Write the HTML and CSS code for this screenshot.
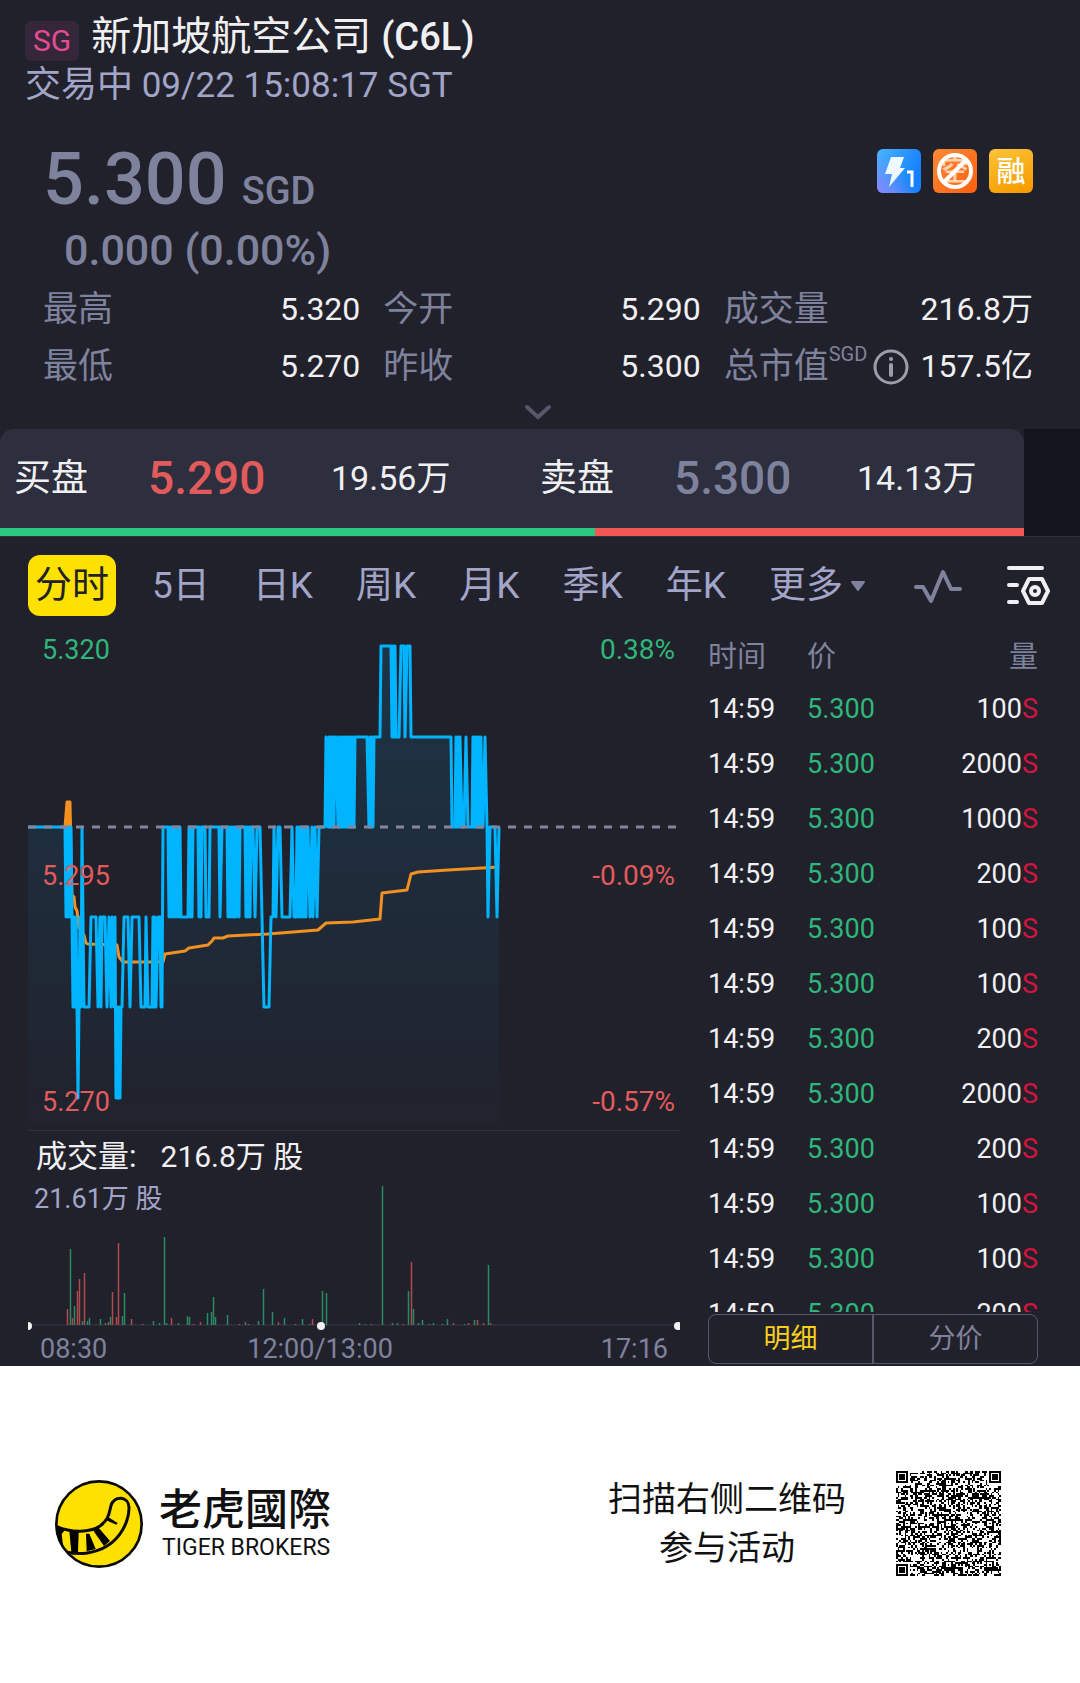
FILE: index.html
```html
<!DOCTYPE html>
<html lang="zh-CN">
<head>
  <meta charset="UTF-8" />
  <meta name="viewport" content="width=device-width, initial-scale=1" />
  <title>新加坡航空公司 (C6L)</title>
  <link rel="stylesheet" href="styles.css">
</head>
<body>
  <main class="app">
    <header class="header">
      <div class="title-row">
        <span class="market">SG</span>
        <h1>新加坡航空公司 <span class="code">(C6L)</span></h1>
      </div>
      <p class="status"><span class="cn">交易中</span> 09/22 15:08:17 SGT</p>
    </header>

    <section class="quote">
      <div class="quote-top">
        <div class="price-row"><strong class="price">5.300</strong><span class="currency">SGD</span></div>
        <div class="badges">
          <svg class="badge" viewBox="0 0 44 44">
            <defs>
              <linearGradient id="blue" x1="0" y1="0" x2="1" y2="0.4">
                <stop offset="0" stop-color="#4ab4ff" />
                <stop offset="1" stop-color="#1580fd" />
              </linearGradient>
              <linearGradient id="violet" x1="0" y1="1" x2="0.5" y2="0.5">
                <stop offset="0" stop-color="#8a86ff" />
                <stop offset="1" stop-color="#8a86ff" stop-opacity="0" />
              </linearGradient>
            </defs>
            <rect width="44" height="44" rx="6" fill="url(#blue)" />
            <rect width="44" height="44" rx="6" fill="url(#violet)" />
            <path d="M14 8h13l-4 11h5L12 38l3-13H8z" fill="#eef8ff" />
            <path d="M30 23h5v15" fill="none" stroke="#fff" stroke-width="3" />
          </svg>
          <svg class="badge" viewBox="0 0 44 44">
            <defs>
              <linearGradient id="orange" x1="0" y1="0" x2="1" y2="1">
                <stop offset="0" stop-color="#ff8a35" />
                <stop offset="1" stop-color="#ff5f10" />
              </linearGradient>
            </defs>
            <rect width="44" height="44" rx="6" fill="url(#orange)" />
            <text class="badge-text faded" x="22" y="32">空</text>
            <circle cx="22" cy="22" r="16" fill="none" stroke="#fff" stroke-width="4" />
            <path d="M11 33 33 11" stroke="#fff" stroke-width="4" />
          </svg>
          <svg class="badge" viewBox="0 0 44 44">
            <defs>
              <linearGradient id="gold" x1="0.3" y1="0" x2="0.7" y2="1">
                <stop offset="0" stop-color="#fbc034" />
                <stop offset="1" stop-color="#f79c00" />
              </linearGradient>
            </defs>
            <rect width="44" height="44" rx="6" fill="url(#gold)" />
            <text class="badge-text" x="22" y="33">融</text>
          </svg>
        </div>
      </div>
      <p class="change">0.000 (0.00%)</p>

      <dl class="stats">
        <div><dt>最高</dt><dd>5.320</dd></div>
        <div><dt>今开</dt><dd>5.290</dd></div>
        <div><dt>成交量</dt><dd>216.8万</dd></div>
        <div><dt>最低</dt><dd>5.270</dd></div>
        <div><dt>昨收</dt><dd>5.300</dd></div>
        <div>
          <dt>总市值<span class="unit">SGD</span></dt>
          <dd>
            <button class="info" aria-label="说明">
              <svg viewBox="0 0 36 36" width="36" height="36">
                <circle cx="18" cy="18" r="16" fill="none" stroke="currentColor" stroke-width="3" />
                <circle cx="18" cy="10" r="2" fill="currentColor" />
                <path d="M18 16v10" stroke="currentColor" stroke-width="4" stroke-linecap="round" />
              </svg>
            </button>157.5亿
          </dd>
        </div>
      </dl>
      <button class="expand" aria-label="展开">
        <svg viewBox="0 0 28 16" width="28" height="16">
          <path d="M3 3l11 10L25 3" fill="none" stroke="currentColor" stroke-width="4" stroke-linecap="round" />
        </svg>
      </button>
    </section>

    <section class="depth">
      <div class="depth-card">
        <div class="depth-row">
          <div class="side"><span class="side-name">买盘</span><span class="side-price down">5.290</span><span class="side-qty">19.56万</span></div>
          <div class="side"><span class="side-name">卖盘</span><span class="side-price">5.300</span><span class="side-qty">14.13万</span></div>
        </div>
        <div class="ratio"><div class="ratio-buy" style="width: 58.1%"></div></div>
      </div>
    </section>

    <nav class="toolbar">
      <button class="tab active">分时</button>
      <button class="tab">5日</button>
      <button class="tab">日K</button>
      <button class="tab">周K</button>
      <button class="tab">月K</button>
      <button class="tab">季K</button>
      <button class="tab">年K</button>
      <button class="tab more">更多<svg viewBox="0 0 14 10" width="14" height="10"><path d="M1 1h12L7 9z" fill="#7f829d" stroke="#7f829d" stroke-width="2" stroke-linejoin="round" /></svg></button>
      <div class="tools">
        <button class="tool" aria-label="指标">
          <svg viewBox="0 0 48 42" width="48" height="42">
            <path d="M2 22h7l8 14L29 7l8 17h9" fill="none" stroke="#7f829d" stroke-width="4" stroke-linecap="round" stroke-linejoin="round" />
          </svg>
        </button>
        <button class="tool" aria-label="设置">
          <svg viewBox="0 0 44 42" width="44" height="42" fill="none" stroke="#f0f0f2" stroke-width="4" stroke-linecap="round" stroke-linejoin="round">
            <path d="M3 3h33M3 20h8M3 37h8" />
            <path d="M23 14h13l6 12-6 12H23l-6-12z" />
            <circle cx="29" cy="26" r="4" />
          </svg>
        </button>
      </div>
    </nav>

    <section class="panel">
      <div class="charts">
        <div class="chart">
          <svg class="plot" viewBox="0 0 652 500">
            <defs>
              <linearGradient id="area" x1="0" y1="0" x2="0" y2="1">
                <stop offset="0" stop-color="#00b4ff" stop-opacity="0.13" />
                <stop offset="1" stop-color="#00b4ff" stop-opacity="0.01" />
              </linearGradient>
            </defs>
            <path id="priceArea" fill="url(#area)" />
            <path d="M37 198L39 172H42L44 198z" fill="#ff8c0a" />
            <polyline class="avg-line" points="37,197 39,172 42,172 43,230 44,265 46,267 47,277 49,281 51,298 56,305 58,313 60,314 89,315 91,327 95,332 135,332 137,324 157,321 161,318 180,315 184,311 186,308 195,308 200,306 240,304 265,302 290,300 298,293 325,292 352,289 354,263 379,260 383,244 390,242 420,240 471,237" />
            <path id="priceLine" class="price-line" />
            <path class="prev-close" d="M0 197H652" />
          </svg>
          <div class="scale left"><span class="up">5.320</span><span class="down">5.295</span><span class="down">5.270</span></div>
          <div class="scale right"><span class="up">0.38%</span><span class="down">-0.09%</span><span class="down">-0.57%</span></div>
        </div>
        <div class="volume">
          <svg class="plot" viewBox="0 0 652 200">
            <path d="M0 194H652" stroke="#383947" stroke-width="1" />
            <g id="volumeBars"></g>
            <g fill="#f4f4f6"><circle cx="0" cy="195" r="4" /><circle cx="293" cy="195" r="4" /><circle cx="650" cy="195" r="4" /></g>
          </svg>
          <div class="legend">
            <p class="legend-main"><span>成交量:</span><span class="legend-value">216.8万 股</span></p>
            <p class="legend-max">21.61万 股</p>
          </div>
        </div>
        <div class="times"><span>08:30</span><span>12:00/13:00</span><span>17:16</span></div>
      </div>

      <aside class="trades">
        <div class="trades-list">
          <table>
            <thead><tr><th>时间</th><th>价</th><th>量</th></tr></thead>
            <tbody id="trades"></tbody>
          </table>
        </div>
        <div class="switch">
          <button class="active">明细</button>
          <button>分价</button>
        </div>
      </aside>
    </section>
  </main>

  <footer class="footer">
    <div class="brand">
      <svg class="brand-logo" viewBox="45 61 264 264" width="88" height="88">
        <circle cx="177" cy="193" r="128" fill="#ffe100" stroke="#0a0a0a" stroke-width="8" />
        <path d="M50 201C95 220 150 219 180 199C207 180 207 160 213 138C220 107 268 108 267 145C266 190 240 235 200 260C165 281 120 286 82 278" fill="none" stroke="#0a0a0a" stroke-width="9" />
        <path d="M47 197l28 14 -10 12 5 42C55 245 46 222 47 197z" />
        <path d="M88 214l28 3 -2 62 -20 -1z" />
        <path d="M138 222l10 0 19 46 -27 7z" />
        <path d="M158 210l16 -8 36 42 -18 15z" />
        <path d="M203 171l30 19 -4 5 -32 -14z" />
      </svg>
      <div class="brand-name">
        <strong>老虎國際</strong>
        <span>TIGER BROKERS</span>
      </div>
    </div>
    <div class="scan">
      <p>扫描右侧二维码<br>参与活动</p>
      <svg class="qr" viewBox="0 0 61 61" shape-rendering="crispEdges"><path id="qr" /></svg>
    </div>
  </footer>

  <script src="app.js"></script>
</body>
</html>
```

FILE: styles.css
```css
:root {
  --bg: #21212b;
  --card: #2d2e3e;
  --text: #f0f0f2;
  --muted: #7f829d;
  --soft: #a2a5c8;
  --green: #2fb67a;
  --red: #e25b5c;
  --yellow: #ffe100;
}

* {
  margin: 0;
  padding: 0;
  box-sizing: border-box;
}

body {
  font-family: Roboto, "Noto Sans CJK SC", sans-serif;
  background-color: #ffffff;
  color: var(--text);
}

button {
  font-family: inherit;
  color: inherit;
  background: none;
  border: none;
  cursor: pointer;
}

svg {
  display: block;
}

.app {
  background-color: var(--bg);
}

/* Header */
.header {
  padding: 10px 25px 0;
}

.title-row {
  display: flex;
  align-items: flex-end;
  gap: 12px;
}

.market {
  margin-bottom: 3px;
  padding: 0 8px;
  border-radius: 6px;
  background-color: #35263a;
  color: #e44c92;
  font-size: 30px;
  line-height: 40px;
}

h1 {
  font-size: 40px;
  font-weight: 400;
  line-height: 54px;
}

.code {
  font-size: 38px;
  font-weight: 500;
}

.status {
  color: var(--soft);
  font-size: 35px;
  line-height: 42px;
}

.status .cn {
  font-size: 36px;
}

/* Quote */
.quote {
  padding: 35px 47px 0 43px;
  color: var(--muted);
}

.quote-top {
  display: flex;
  justify-content: space-between;
}

.price-row {
  display: flex;
  align-items: baseline;
  gap: 15px;
  font-weight: 500;
}

.price {
  font-size: 72px;
  font-weight: 500;
  line-height: 76px;
}

.currency {
  font-size: 38px;
  line-height: 40px;
}

.badges {
  display: flex;
  gap: 12px;
  padding-top: 7px;
}

.badge {
  width: 44px;
  height: 44px;
}

.badge-text {
  fill: #ffffff;
  font-size: 29px;
  font-weight: 500;
  text-anchor: middle;
}

.badge-text.faded {
  fill: #ffd2b0;
}

.change {
  padding: 4px 21px 3px;
  font-size: 43px;
  font-weight: 500;
  line-height: 56px;
}

.stats {
  display: grid;
  grid-template-columns: 317fr 317fr 309fr;
  column-gap: 23px;
  line-height: 57px;
}

.stats div {
  display: flex;
  justify-content: space-between;
}

dt {
  display: flex;
  font-size: 35px;
}

dd {
  display: flex;
  align-items: center;
  color: var(--text);
  font-size: 32px;
}

.unit {
  font-size: 20px;
  line-height: 32px;
}

.info {
  margin-right: 12px;
  color: #9b9dab;
}

.expand {
  display: block;
  margin: 0 auto;
  padding: 9px 0;
  color: #55576a;
}

/* Best bid and ask */
.depth {
  padding-right: 56px;
  background: linear-gradient(to left, #13141d 56px, transparent 56px);
  border-bottom: 1px solid #30313d;
}

.depth-card {
  overflow: hidden;
  border-radius: 14px 14px 0 0;
  background-color: var(--card);
}

.depth-row {
  display: grid;
  grid-template-columns: 526fr 498fr;
  line-height: 99px;
}

.side {
  display: grid;
  grid-template-columns: 134px 183px auto;
  align-items: center;
  padding-left: 14px;
}

.side-name {
  font-size: 37px;
}

.side-price {
  color: var(--muted);
  font-size: 46px;
  font-weight: 500;
}

.side-qty {
  font-size: 34px;
}

.ratio {
  height: 8px;
  background-color: #f15854;
}

.ratio-buy {
  height: 8px;
  background-color: #29c780;
}

.up {
  color: var(--green);
}

.down,
.side-price.down {
  color: var(--red);
}

/* Period tabs */
.toolbar {
  display: flex;
  gap: 29px;
  padding: 18px 30px 11px 28px;
}

.tab {
  padding: 0 7px;
  border-radius: 12px;
  color: var(--soft);
  font-size: 37px;
  line-height: 61px;
  white-space: nowrap;
}

.tab.active {
  background-color: var(--yellow);
  color: #21212b;
}

.tab.more {
  display: flex;
  align-items: center;
  gap: 8px;
}

.tools {
  display: flex;
  align-items: center;
  gap: 44px;
  margin-left: auto;
}

/* Charts */
.panel {
  display: grid;
  grid-template-columns: 1fr 330px;
  gap: 28px;
  padding: 0 42px 0 28px;
}

.charts {
  padding-top: 3px;
}

.chart,
.volume {
  position: relative;
}

.plot {
  width: 100%;
}

.price-line,
.avg-line {
  fill: none;
  stroke: #00b4ff;
  stroke-width: 3;
  stroke-linejoin: round;
}

.avg-line {
  stroke: #f29022;
}

.prev-close {
  stroke: #83869f;
  stroke-width: 3;
  stroke-dasharray: 8 8;
}

.scale {
  position: absolute;
  top: 4px;
  bottom: 12px;
  display: flex;
  flex-direction: column;
  justify-content: space-between;
  font-size: 27px;
  line-height: 32px;
}

.scale.left {
  left: 14px;
}

.scale.right {
  right: 5px;
  font-size: 28px;
  text-align: right;
}

.volume {
  border-top: 1px solid #30313d;
}

.legend {
  position: absolute;
  top: 4px;
  left: 6px;
}

.legend-main {
  display: flex;
  gap: 24px;
  padding-left: 2px;
  font-size: 31px;
  line-height: 44px;
}

.legend-value {
  font-size: 30px;
}

.legend-max {
  color: var(--soft);
  font-size: 27px;
  line-height: 40px;
}

.times {
  display: grid;
  grid-template-columns: 33% 1fr auto;
  padding: 2px 12px 0;
  color: var(--muted);
  font-size: 27px;
  line-height: 33px;
}

/* Trades */
.trades-list {
  height: 685px;
  overflow: hidden;
}

table {
  width: 100%;
  border-collapse: collapse;
  font-size: 27px;
}

th {
  height: 54px;
  color: var(--muted);
  font-size: 29px;
  font-weight: 400;
  text-align: left;
}

td {
  height: 55px;
}

th:first-child,
td:first-child {
  width: 99px;
}

th:last-child,
td:last-child {
  text-align: right;
}

.sell {
  color: #d3143f;
}

.switch {
  display: flex;
  margin-top: 2px;
  border: 1px solid #55576a;
  border-radius: 8px;
}

.switch button {
  flex: 1;
  color: var(--muted);
  font-size: 27px;
  line-height: 48px;
}

.switch .active {
  border-right: 2px solid #55576a;
  color: #f9cf1c;
}

/* Footer */
.footer {
  display: flex;
  align-items: center;
  justify-content: space-between;
  padding: 105px 79px 105px 55px;
  color: #111111;
}

.brand,
.scan {
  display: flex;
  align-items: center;
}

.brand {
  gap: 16px;
}

.brand-name {
  display: flex;
  flex-direction: column;
}

.brand-name strong {
  font-family: Roboto, "Noto Sans CJK TC", sans-serif;
  font-size: 43px;
  font-weight: 500;
  line-height: 48px;
}

.brand-name span {
  padding-left: 3px;
  font-size: 23px;
  line-height: 28px;
}

.scan {
  gap: 50px;
  font-size: 34px;
  line-height: 49px;
  text-align: center;
}

.qr {
  width: 105px;
  height: 105px;
}
```

FILE: app.js
```javascript
// Price levels in plot units
const levelY = { 320: 16, 310: 107, 300: 197, 290: 287, 280: 377, 270: 468 };

// [x, level] is a point, [from, to, levelA, levelB] is a stretch of quick ticks
const ticks = [
  [0, 300], [37, 300], [38, 44, 290, 300], [44, 290], [45, 48, 280, 290],
  [49, 280], [50, 270], [51, 280], [52, 290], [53, 280], [54, 300], [56, 280], [61, 280],
  [63, 290], [68, 290], [70, 280], [72, 290], [73, 280], [74, 290], [77, 290], [79, 280], [81, 290],
  [83, 280], [84, 290], [86, 280], [87, 290], [88, 93, 270, 280], [94, 280], [96, 290], [100, 290],
  [102, 280], [104, 290], [111, 290], [113, 280], [117, 280], [118, 290],
  [120, 280], [124, 280], [125, 128, 290, 280], [130, 290], [132, 290], [133, 280],
  [134, 280], [135, 300], [140, 300], [141, 153, 290, 300], [154, 290], [160, 290],
  [161, 165, 300, 290], [165, 300], [170, 300], [171, 174, 290, 300], [177, 300],
  [178, 290], [181, 290], [182, 300], [191, 300], [192, 290], [194, 300], [199, 300],
  [200, 208, 290, 300], [209, 300], [211, 290], [212, 300], [217, 300],
  [218, 223, 290, 300], [225, 300], [227, 290], [229, 300], [232, 300], [234, 290],
  [236, 280], [241, 280], [243, 290], [245, 290], [246, 300], [248, 290], [250, 300],
  [252, 300], [254, 290], [262, 290], [264, 300], [266, 290], [268, 279, 290, 300],
  [280, 300], [282, 290], [284, 300], [285, 290], [287, 300], [289, 290], [291, 300],
  [297, 300], [298, 310], [300, 307, 300, 310], [308, 310], [310, 326, 300, 310],
  [327, 310], [339, 310], [341, 346, 300, 310], [347, 310], [352, 310], [353, 320],
  [363, 320], [364, 368, 310, 320], [369, 310], [371, 310], [373, 320], [376, 320],
  [377, 310], [379, 320], [382, 320], [383, 310], [423, 310], [424, 300], [427, 300],
  [428, 432, 310, 300], [434, 300], [436, 300], [438, 310], [440, 300], [444, 300],
  [445, 454, 310, 300], [455, 300], [457, 310], [459, 300], [460, 290], [462, 300],
  [467, 300], [469, 290], [471, 300]
];

const points = [];
ticks.forEach((t) => {
  if (t.length === 2) {
    points.push(`${t[0]} ${levelY[t[1]]}`);
    return;
  }
  for (let x = t[0], i = 0; x <= t[1]; x++, i++) {
    points.push(`${x} ${levelY[i % 2 ? t[3] : t[2]]}`);
  }
});

const line = 'M' + points.join('L');
document.getElementById('priceLine').setAttribute('d', line);
document.getElementById('priceArea').setAttribute('d', line + 'L471 494H0z');

// Volume bars: [x, height, side]
const volumes = [
  [39, 16, 'r'], [42, 76, 'g'], [44, 7, 'r'], [46, 19, 'g'], [49, 34, 'r'], [51, 46, 'r'],
  [54, 4, 'g'], [56, 52, 'r'], [59, 4, 'g'], [61, 7, 'g'], [72, 6, 'g'], [77, 2, 'g'],
  [80, 3, 'r'], [82, 8, 'g'], [84, 33, 'r'], [88, 8, 'r'], [90, 82, 'r'], [94, 9, 'g'],
  [96, 32, 'g'], [103, 6, 'r'], [114, 1, 'r'], [125, 4, 'g'], [131, 2, 'g'], [136, 88, 'g'],
  [138, 2, 'g'], [143, 7, 'r'], [150, 2, 'g'], [159, 9, 'g'], [161, 8, 'g'], [165, 1, 'r'],
  [172, 3, 'r'], [179, 12, 'g'], [183, 13, 'g'], [185, 28, 'g'], [187, 8, 'g'],
  [199, 10, 'g'], [211, 1, 'r'], [217, 3, 'g'], [220, 1, 'r'], [230, 4, 'g'],
  [235, 36, 'g'], [244, 13, 'g'], [250, 3, 'r'], [256, 7, 'g'], [267, 1, 'r'],
  [274, 6, 'g'], [281, 1, 'g'], [284, 6, 'r'], [294, 34, 'g'], [298, 32, 'g'],
  [331, 2, 'g'], [337, 1, 'g'], [343, 1, 'r'], [354, 139, 'g'], [364, 2, 'g'],
  [369, 2, 'g'], [375, 1, 'r'], [380, 34, 'g'], [383, 63, 'r'], [385, 16, 'g'],
  [390, 2, 'g'], [394, 5, 'g'], [401, 1, 'g'], [405, 2, 'g'], [414, 1, 'g'],
  [419, 6, 'g'], [425, 2, 'r'], [436, 1, 'g'], [440, 2, 'r'], [446, 5, 'g'],
  [449, 5, 'r'], [455, 2, 'r'], [460, 60, 'g'], [462, 2, 'r']
];

document.getElementById('volumeBars').innerHTML = volumes.map(([x, h, side]) =>
  `<path d="M${x + 0.5} 194v-${h}" stroke="${side === 'g' ? '#2a8a63' : '#b04a4c'}" stroke-width="1.5" />`
).join('');

// Latest trades
const quantities = [100, 2000, 1000, 200, 100, 100, 200, 2000, 200, 100, 100, 200];
document.getElementById('trades').innerHTML = quantities.map((qty) =>
  `<tr><td>14:59</td><td class="up">5.300</td><td>${qty}<span class="sell">S</span></td></tr>`
).join('');

// QR modules: finder and alignment squares, the rest from a seeded sequence
const size = 61;
let seed = 20220922;
function nextBit() {
  seed = (seed * 1103515245 + 12345) % 2147483648;
  return (seed >> 16) & 1;
}

function squareAt(x, y, cx, cy, radius) {
  const d = Math.max(Math.abs(x - cx), Math.abs(y - cy));
  if (d > radius) return null;
  return radius === 4 ? d !== 4 && d !== 2 : d !== 1;
}

const squares = [[3, 3, 4], [57, 3, 4], [3, 57, 4]];
[6, 30, 54].forEach((cx) => [6, 30, 54].forEach((cy) => {
  const corner = (cx === 6 && cy !== 30) || (cx === 54 && cy === 6);
  if (!corner) squares.push([cx, cy, 2]);
}));

let modules = '';
for (let y = 0; y < size; y++) {
  for (let x = 0; x < size; x++) {
    let on = nextBit() === 1;
    squares.forEach(([cx, cy, r]) => {
      const value = squareAt(x, y, cx, cy, r);
      if (value !== null) on = value;
    });
    if (on) modules += `M${x} ${y}h1v1h-1z`;
  }
}
document.getElementById('qr').setAttribute('d', modules);
```
